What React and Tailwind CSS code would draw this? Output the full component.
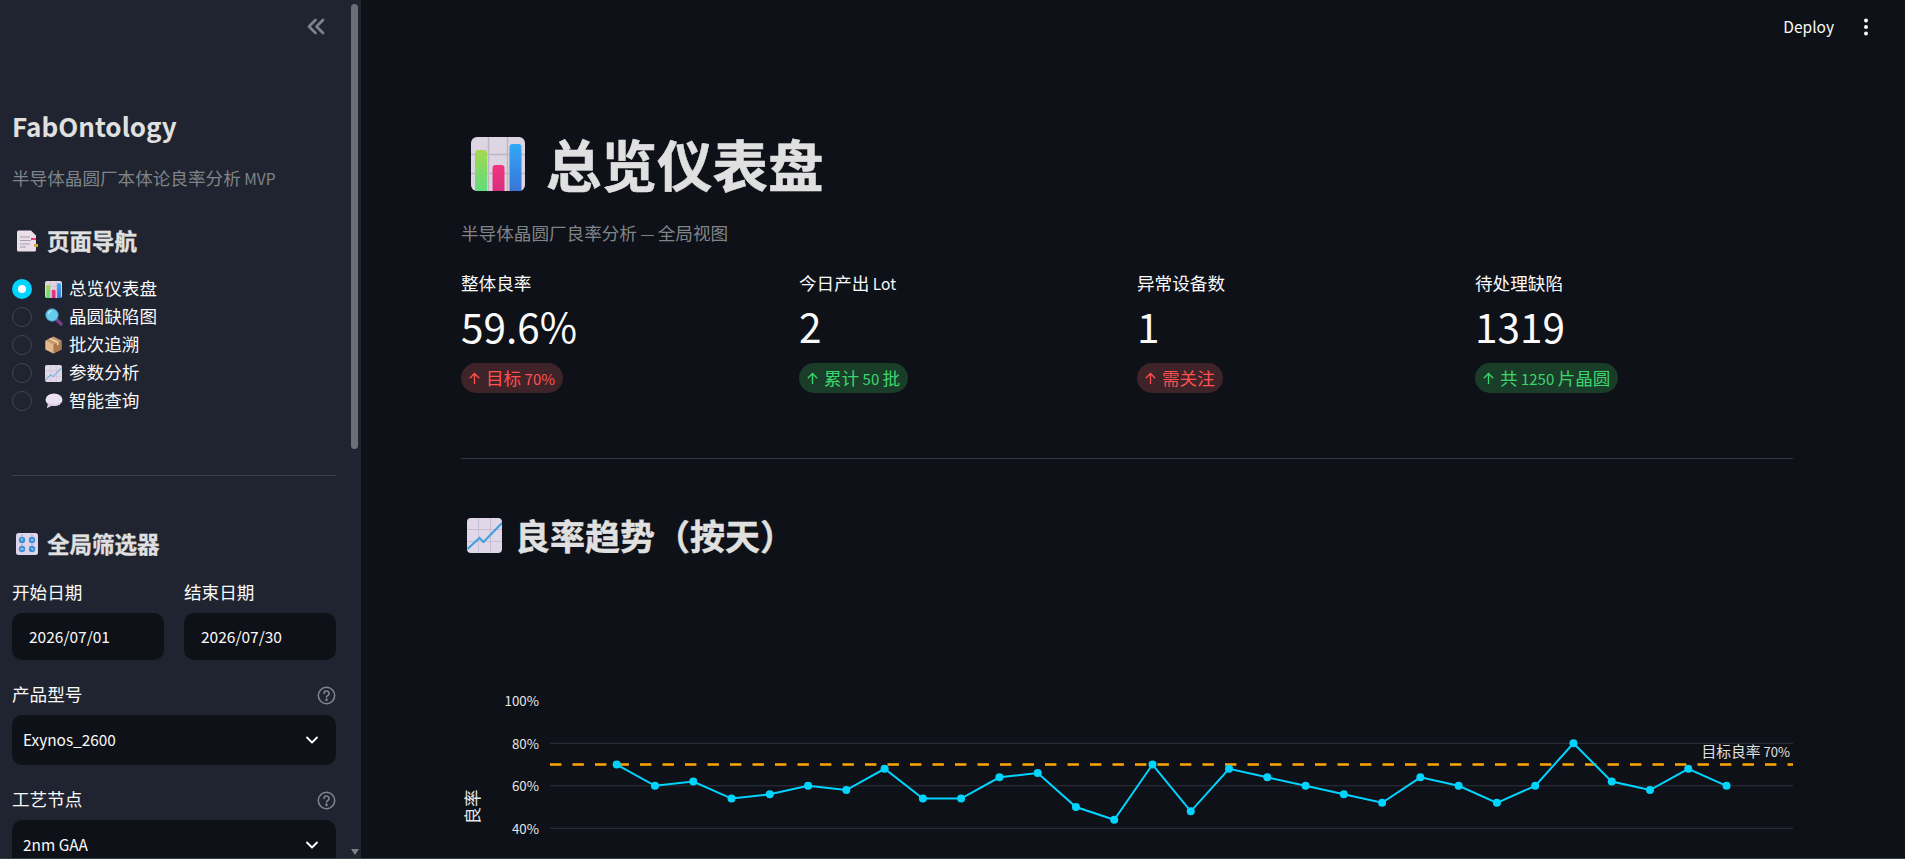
const BarEmoji = ({ size }) => (
  <svg width={size} height={size} viewBox="0 0 54 54" className="shrink-0">
    <rect width="54" height="54" rx="6" fill="#ddd6e2" />
    <path d="M17.500 0V54M36.500 0V54M0 17.500H54M0 36.500H54" stroke="#bdb6c4" strokeWidth="1.500" />
    <defs>
      <linearGradient id="g1" x1="0" y1="0" x2="0" y2="1"><stop offset="0" stopColor="#a5d84f" /><stop offset="1" stopColor="#5fdc7c" /></linearGradient>
      <linearGradient id="g2" x1="0" y1="0" x2="0" y2="1"><stop offset="0" stopColor="#f0367e" /><stop offset="1" stopColor="#d92f80" /></linearGradient>
      <linearGradient id="g3" x1="0" y1="0" x2="0" y2="1"><stop offset="0" stopColor="#30a9f5" /><stop offset="1" stopColor="#3a74d6" /></linearGradient>
    </defs>
    <path d="M4 54V16a3 3 0 0 1 3-3h6a3 3 0 0 1 3 3V54Z" fill="url(#g1)" />
    <path d="M21.500 54V31a3 3 0 0 1 3-3h6a3 3 0 0 1 3 3V54Z" fill="url(#g2)" />
    <path d="M38.500 54V10a3 3 0 0 1 3-3h6a3 3 0 0 1 3 3V54Z" fill="url(#g3)" />
  </svg>
);

const TrendEmoji = ({ size }) => (
  <svg width={size} height={size} viewBox="0 0 35 35" className="shrink-0">
    <rect width="35" height="35" rx="4" fill="#e0d8e8" />
    <path d="M11.500 0V35M23.500 0V35M0 11.500H35M0 23.500H35" stroke="#c8bfd2" strokeWidth="1" />
    <path d="M0.500 31L12.500 20L16.500 24L35 5" fill="none" stroke="#3f9fdc" strokeWidth="2" />
  </svg>
);

const PageEmoji = () => (
  <svg width="22" height="22" viewBox="0 0 22 22" className="shrink-0">
    <path d="M1 2a1.500 1.500 0 0 1 1.500-1.500H15L20 5.500V20a1.500 1.500 0 0 1-1.500 1.500H2.500A1.500 1.500 0 0 1 1 20Z" fill="#eadfe8" />
    <path d="M4 7H14M4 10.500H15M4 14H14M4 17H10" stroke="#a89eb0" strokeWidth="1.200" />
    <rect x="15" y="8" width="5" height="2" fill="#e83f72" />
    <rect x="18" y="14" width="4" height="3" fill="#d9a441" />
  </svg>
);

const SearchEmoji = () => (
  <svg width="18" height="18" viewBox="0 0 18 18" className="shrink-0">
    <path d="M10.500 10.500L16 16" stroke="#7a3f8c" strokeWidth="3.200" strokeLinecap="round" />
    <circle cx="7" cy="7" r="6.200" fill="#66cdf0" stroke="#4aa0c8" strokeWidth="0.800" />
    <path d="M3.500 6A3.500 3.500 0 0 1 6.500 3" stroke="#c6eefb" strokeWidth="1.200" fill="none" />
  </svg>
);

const BoxEmoji = () => (
  <svg width="17" height="18" viewBox="0 0 17 18" className="shrink-0">
    <path d="M8.500 0.500L16.500 4.500V13.500L8.500 17.500L0.500 13.500V4.500Z" fill="#c79a6b" />
    <path d="M0.500 4.500L8.500 8.500V17.500L0.500 13.500Z" fill="#e2b98c" />
    <path d="M8.500 8.500L16.500 4.500V13.500L8.500 17.500Z" fill="#a97a4e" />
    <path d="M4 2.700L12 6.700V9.500L13.500 8.800V6L5.500 2Z" fill="#f0d9ba" />
  </svg>
);

const BubbleEmoji = () => (
  <svg width="18" height="16" viewBox="0 0 18 16" className="shrink-0">
    <ellipse cx="9" cy="6.800" rx="8.500" ry="6.300" fill="#ece0f2" />
    <path d="M3 10.500L1.800 15.200L7.500 12.500Z" fill="#d6c4e2" />
    <path d="M1.500 8.500C4 12.500 14 12.500 16.500 8.500C15 13 3 13 1.500 8.500Z" fill="#cdbada" />
  </svg>
);

const KnobEmoji = () => (
  <svg width="22" height="22" viewBox="0 0 22 22" className="shrink-0">
    <rect width="22" height="22" rx="2.500" fill="#ddd3ea" />
    <circle cx="6" cy="7" r="3.200" fill="#3f8fd6" />
    <circle cx="16" cy="7" r="3.200" fill="#3f8fd6" />
    <circle cx="6" cy="16" r="3.200" fill="#3f8fd6" />
    <circle cx="16" cy="16" r="3.200" fill="#3f8fd6" />
    <path d="M6 1.800V3.500M16 1.800V3.500M6 10.800V12.500M16 10.800V12.500" stroke="#8a86a8" strokeWidth="0.800" />
    <path d="M6 5.500V7.500M15 7H17.500M4.500 16H7.500M15.500 15L17 17" stroke="#dff0fb" strokeWidth="1" />
  </svg>
);

const Chevron = () => (
  <svg width="14" height="14" viewBox="0 0 14 14" fill="none" stroke="#fafafa" strokeWidth="1.900" strokeLinecap="round" strokeLinejoin="round">
    <path d="M2 4.500L7 9.500L12 4.500" />
  </svg>
);

const HelpIcon = () => (
  <svg width="19" height="19" viewBox="0 0 19 19" fill="none" stroke="#83868e" strokeWidth="1.500">
    <circle cx="9.500" cy="9.500" r="8.200" />
    <path d="M7 7.400A2.500 2.500 0 1 1 10.500 9.700C9.800 10.100 9.500 10.500 9.500 11.300" strokeLinecap="round" />
    <circle cx="9.500" cy="13.800" r="0.600" fill="#83868e" />
  </svg>
);

const ArrowUp = () => (
  <svg width="13" height="13" viewBox="0 0 13 13" fill="none" stroke="currentColor" strokeWidth="1.300" className="shrink-0">
    <path d="M6.500 12V1.500M1.800 6.200L6.500 1.500L11.200 6.200" />
  </svg>
);

// Latin runs sit a little smaller than the CJK runs around them, as in the picture.
const Mix = ({ text, latin }) => (
  <span>
    {text.split(/([\x00-\x7f—]+)/).map((part, i) =>
      i % 2 ? <span key={i} className={latin}>{part}</span> : part
    )}
  </span>
);

const navItems = [
  { label: "总览仪表盘", icon: <BarEmoji size={17} />, active: true },
  { label: "晶圆缺陷图", icon: <SearchEmoji /> },
  { label: "批次追溯", icon: <BoxEmoji /> },
  { label: "参数分析", icon: <TrendEmoji size={17} /> },
  { label: "智能查询", icon: <BubbleEmoji /> },
];

const metrics = [
  { label: "整体良率", value: "59.6%", note: "目标 70%", good: false },
  { label: "今日产出 Lot", value: "2", note: "累计 50 批", good: true },
  { label: "异常设备数", value: "1", note: "需关注", good: false },
  { label: "待处理缺陷", value: "1319", note: "共 1250 片晶圆", good: true },
];

const values = [70, 60, 62, 54, 56, 60, 58, 68, 54, 54, 64, 66, 50, 44, 70, 48, 68, 64, 60, 56, 52, 64, 60, 52, 60, 80, 62, 58, 68, 60];
const yOf = (v) => 73.3 + (80 - v) * 2.125;
const xOf = (i) => 155.7 + i * 38.27;

const YieldChart = () => (
  <svg width="1332" height="220" viewBox="0 0 1332 220" className="mt-[113px] shrink-0 block">
    {[80, 60, 40].map((v) => (
      <line key={v} x1="89" x2="1332" y1={yOf(v)} y2={yOf(v)} stroke="#30333d" strokeWidth="1" />
    ))}
    {[100, 80, 60, 40].map((v) => (
      <text key={v} x="78" y={yOf(v) + 5.500} textAnchor="end" fontSize="13.300" fill="#e6e6e6">{v}%</text>
    ))}
    <text transform="translate(18 137) rotate(-90)" textAnchor="middle" fontSize="17.600" fill="#e6e6e6">良率</text>
    <line x1="89" x2="1332" y1={yOf(70)} y2={yOf(70)} stroke="#ffa600" strokeWidth="2.500" strokeDasharray="11.400 11.100" />
    <text x="1329" y="87" textAnchor="end" fontSize="14.800" fill="#e0e0e0">目标良率<tspan fontSize="13"> 70%</tspan></text>
    <polyline points={values.map((v, i) => `${xOf(i)},${yOf(v)}`).join(" ")} fill="none" stroke="#00d4ff" strokeWidth="2" />
    {values.map((v, i) => (
      <circle key={i} cx={xOf(i)} cy={yOf(v)} r="4" fill="#00d4ff" />
    ))}
  </svg>
);

const Field = ({ label, value }) => (
  <div className="flex-1 min-w-0">
    <div className="h-6 mt-px flex items-center text-[17.6px] text-[#fafafa]">{label}</div>
    <div className="mt-[9px] h-[47px] rounded-[10px] bg-[#0e1117] flex items-center pl-[17px] text-[15.5px] text-[#fafafa]">{value}</div>
  </div>
);

const SelectField = ({ label, value, className }) => (
  <div className={className}>
    <div className="h-6 flex items-center justify-between text-[17.6px] text-[#fafafa]">
      <span className="-mt-[2px]">{label}</span>
      <HelpIcon />
    </div>
    <div className="mt-2 h-[50px] rounded-[10px] bg-[#0e1117] flex items-center justify-between pl-[11px] pr-[17px] text-[15.4px] text-[#fafafa]">
      <span>{value}</span>
      <Chevron />
    </div>
  </div>
);

const Sidebar = () => (
  <aside className="relative w-[361px] h-full shrink-0 overflow-hidden bg-[#1f2430] px-3">
    <div className="h-[54px] pr-[24px] flex items-center justify-end -mt-px">
      <svg width="18" height="17" viewBox="0 0 18 17" fill="none" stroke="#7f828a" strokeWidth="2.800" strokeLinecap="round" strokeLinejoin="round">
        <path d="M8.500 2L2 8.500L8.500 15M16 2L9.500 8.500L16 15" />
      </svg>
    </div>
    <div className="mt-[52px] h-10 flex items-center text-[26px] font-semibold text-[#e0e0e0]">FabOntology</div>
    <div className="mt-[21px] h-6 flex items-center text-[17.6px] text-[#808489]">
      <Mix text="半导体晶圆厂本体论良率分析 MVP" latin="text-[15.5px]" />
    </div>
    <div className="mt-[37px] h-7 flex items-center gap-[9px] pl-1 text-[22.5px] font-bold text-[#e0e0e0] [-webkit-text-stroke:0.3px_#e0e0e0]">
      <PageEmoji />
      <span>页面导航</span>
    </div>
    <ul className="mt-[20px] flex flex-col">
      {navItems.map((n) => (
        <li key={n.label} className="h-7 flex items-center text-[17.6px] text-[#fafafa]">
          {n.active ? (
            <span className="w-5 h-5 rounded-full bg-[#00d4ff] flex items-center justify-center shrink-0">
              <span className="w-2 h-2 rounded-full bg-white" />
            </span>
          ) : (
            <span className="w-5 h-5 rounded-full border border-[#3f4450] shrink-0" />
          )}
          <span className="ml-[13px] w-[17px] flex justify-center shrink-0">{n.icon}</span>
          <span className="ml-[7px] -mt-[2px]">{n.label}</span>
        </li>
      ))}
    </ul>
    <div className="mt-[60px] w-[324px] h-px bg-[#3a3e49]" />
    <div className="mt-[54px] h-7 flex items-center gap-[9px] pl-1 text-[22.5px] font-bold text-[#e0e0e0] [-webkit-text-stroke:0.3px_#e0e0e0]">
      <KnobEmoji />
      <span>全局筛选器</span>
    </div>
    <div className="mt-[21px] w-[324px] flex gap-5">
      <Field label="开始日期" value="2026/07/01" />
      <Field label="结束日期" value="2026/07/30" />
    </div>
    <SelectField className="mt-[23px] w-[324px]" label="产品型号" value="Exynos_2600" />
    <SelectField className="mt-[23px] w-[324px]" label="工艺节点" value="2nm GAA" />
    <div className="absolute right-[3px] top-[4px] w-[7px] h-[445px] rounded-full bg-[#6b6f78]" />
    <div className="absolute right-[2px] bottom-[4px] w-0 h-0 border-l-[4.5px] border-r-[4.5px] border-t-[6px] border-l-transparent border-r-transparent border-t-[#7e8087]" />
  </aside>
);

const Metric = ({ label, value, note, good }) => (
  <div>
    <div className="h-6 flex items-center text-[17.6px] text-[#fafafa]">
      <Mix text={label} latin="text-[15.5px]" />
    </div>
    <div className="h-14 mt-[3px] flex items-center text-[40.5px] text-[#fafafa]">{value}</div>
    <div
      className={
        good
          ? "mt-[9px] h-[30px] w-fit rounded-full pl-[7px] pr-2 flex items-center gap-[5px] text-[17.6px] bg-[#1a3d2a] text-[#3dd56d]"
          : "mt-[9px] h-[30px] w-fit rounded-full pl-[7px] pr-2 flex items-center gap-[5px] text-[17.6px] bg-[#3e2328] text-[#ff5252]"
      }
    >
      <ArrowUp />
      <Mix text={note} latin="text-[15px]" />
    </div>
  </div>
);

export default function App() {
  return (
    <div className="relative h-screen w-full overflow-hidden flex bg-[#0e1117] font-['Noto_Sans_CJK_SC',sans-serif]">
      <Sidebar />
      <main className="flex-1 min-w-0 h-full overflow-hidden pl-[100px] pr-[112px]">
        <header className="absolute top-0 right-0 h-[54px] flex items-center gap-[30px] pr-[37px] text-[#fafafa] text-[15.5px]">
          <span>Deploy</span>
          <svg width="4" height="18" viewBox="0 0 4 18" fill="#fafafa">
            <circle cx="2" cy="2.500" r="2" />
            <circle cx="2" cy="9" r="2" />
            <circle cx="2" cy="15.500" r="2" />
          </svg>
        </header>
        <div className="pt-[132px]">
          <h1 className="h-16 flex items-center gap-[21px] pl-[10px] text-[55.5px] font-bold text-[#e0e0e0] [-webkit-text-stroke:0.5px_#e0e0e0]">
            <BarEmoji size={54} />
            <span>总览仪表盘</span>
          </h1>
          <p className="mt-[25px] h-6 flex items-center text-[17.6px] text-[#808489]">
            <Mix text="半导体晶圆厂良率分析 — 全局视图" latin="text-[15.5px]" />
          </p>
          <section className="mt-[26px] grid grid-cols-4 gap-5">
            {metrics.map((m) => (
              <Metric key={m.label} {...m} />
            ))}
          </section>
          <div className="mt-[65px] h-px bg-[#33363e]" />
          <h2 className="mt-[54px] h-11 flex items-center gap-[13px] pl-[6px] text-[35px] font-bold text-[#e0e0e0] [-webkit-text-stroke:0.4px_#e0e0e0]">
            <TrendEmoji size={35} />
            <span>良率趋势（按天）</span>
          </h2>
          <YieldChart />
        </div>
      </main>
      <div className="absolute bottom-0 left-0 right-0 h-px bg-[#3a3f47]" />
    </div>
  );
}
